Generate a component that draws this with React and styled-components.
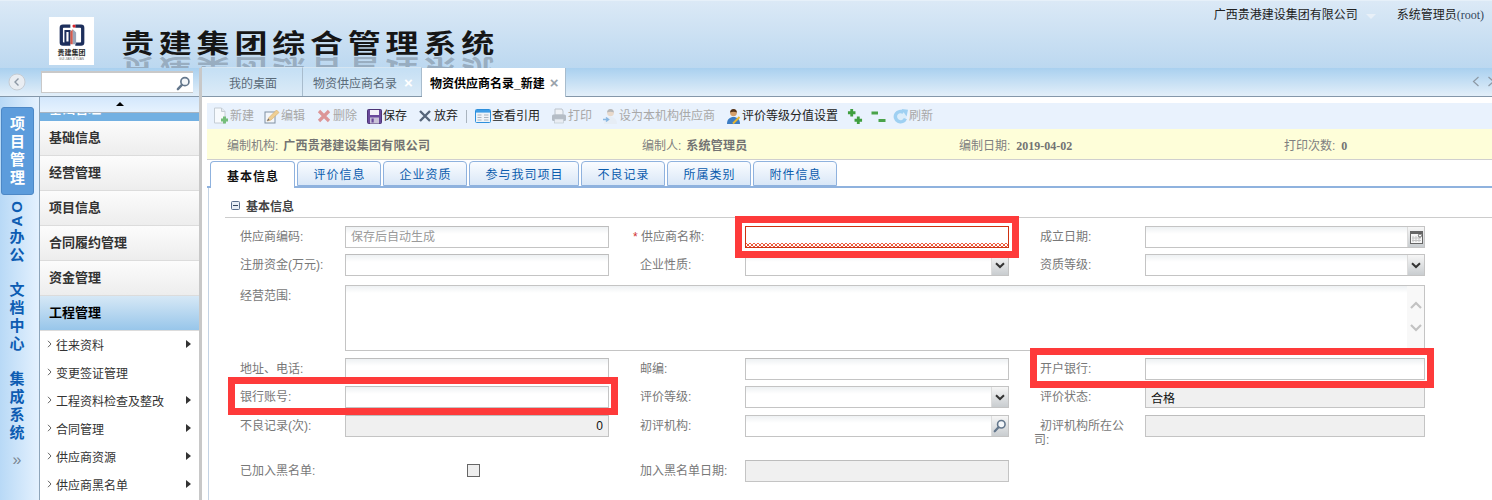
import React from "react";
import styled, { createGlobalStyle } from "styled-components";

const FONT = `"Liberation Sans", "Noto Sans CJK SC", sans-serif`;
const SERIF = `"Liberation Serif", "Noto Sans CJK SC", serif`;

const GlobalStyle = createGlobalStyle`
  html, body {
    margin: 0;
    padding: 0;
    background: #ffffff;
  }
  body {
    font-family: ${FONT};
    font-size: 12px;
  }
  * {
    box-sizing: border-box;
  }
`;

/* ---------- icons ---------- */

const LogoMark = () => (
  <svg width="28" height="27" viewBox="0 0 34 31">
    <path d="M15 2H6Q2 2 2 6V24Q2 28 6 28H15V24H7Q6 24 6 23V7Q6 6 7 6H15Z" fill="#1d2f5c" />
    <path d="M9 10H14V24H9Z" fill="none" stroke="#1d2f5c" strokeWidth="2.4" />
    <path d="M21 6H27Q28 6 28 7V23Q28 24 27 24H21V28H28Q32 28 32 24V6Q32 2 28 2H21Z" fill="#1d2f5c" />
    <path d="M15 26V11L18 8V26Z" fill="#d65b4d" />
    <path d="M18 26V8L22 12V26Z" fill="#9aa5b8" />
    <circle cx="19.5" cy="4" r="2" fill="#d8262c" />
  </svg>
);

const SearchIcon = ({ size = 15 }) => (
  <svg width={size} height={size} viewBox="0 0 16 16">
    <circle cx="9.5" cy="6" r="4.3" fill="#f4f7fa" stroke="#64778c" strokeWidth="1.8" />
    <path d="M6.3 9.4L2 14" stroke="#64778c" strokeWidth="2.6" strokeLinecap="round" />
  </svg>
);

const NewIcon = () => (
  <svg width="16" height="18" viewBox="0 0 16 18">
    <path d="M1.5 1H8.5L12 4.5V16H1.5Z" fill="#fbfcfd" stroke="#bcc4cc" />
    <path d="M8.5 1V4.5H12" fill="#e4e8ec" stroke="#bcc4cc" />
    <path d="M11.5 9.5V16.5M8 13H15" stroke="#57b05a" strokeWidth="3" />
  </svg>
);

const EditIcon = () => (
  <svg width="16" height="16" viewBox="0 0 16 16">
    <rect x="1" y="4" width="10" height="11" fill="#f6f8fa" stroke="#667a8e" />
    <path d="M3 13L5 9.5L12.5 2L15 4.5L7 12Z" fill="#f1c77a" stroke="#d4a251" strokeWidth=".7" />
    <path d="M3 13L4.3 10.6L5.6 12Z" fill="#445" />
  </svg>
);

const DeleteIcon = () => (
  <svg width="14" height="14" viewBox="0 0 14 14">
    <path d="M2 2L12 12M12 2L2 12" stroke="#d98080" strokeWidth="3.2" />
  </svg>
);

const SaveIcon = () => (
  <svg width="15" height="15" viewBox="0 0 15 15">
    <rect x="0.5" y="0.5" width="14" height="14" rx="1" fill="#6a4a9c" stroke="#4d3576" />
    <rect x="3" y="1" width="9" height="5" fill="#f3f3f8" />
    <rect x="3" y="8.5" width="9" height="6" fill="#c9c3d8" />
    <rect x="4.5" y="9.5" width="2.2" height="4" fill="#6a4a9c" />
  </svg>
);

const DiscardIcon = () => (
  <svg width="14" height="14" viewBox="0 0 14 14">
    <path d="M2 2L12 12M12 2L2 12" stroke="#56657a" strokeWidth="2.4" />
  </svg>
);

const ViewIcon = () => (
  <svg width="16" height="14" viewBox="0 0 16 14">
    <rect x="0.5" y="0.5" width="15" height="13" rx="1" fill="#eef3f8" stroke="#2d8fdc" />
    <rect x="1" y="1" width="14" height="2.6" fill="#3c9ce6" />
    <path d="M2.5 6H6.5M2.5 8.5H6.5M2.5 11H6.5M9 6H13.5M9 8.5H13.5M9 11H13.5" stroke="#a8b4c0" />
  </svg>
);

const PrintIcon = () => (
  <svg width="16" height="16" viewBox="0 0 16 16">
    <path d="M4 1H11L12 3V7H4Z" fill="#f1f3f5" stroke="#b0b8c0" />
    <rect x="1" y="6.5" width="14" height="6.5" rx="1.5" fill="#a9b1b9" />
    <rect x="3.5" y="11" width="9" height="4" fill="#e9edf1" stroke="#b0b8c0" strokeWidth=".6" />
  </svg>
);

const UserIcon = ({ muted, pen }) => (
  <svg width="16" height="17" viewBox="0 0 16 17">
    <circle cx="8.5" cy="4.8" r="3.4" fill={muted ? "#e8d3bf" : "#d6a06a"} />
    <path d="M8.5 1C6 1 5 3 5.2 4.4C7 3.6 10 3.6 11.8 4.4C12 3 11 1 8.5 1Z" fill={muted ? "#a9a9a9" : "#54351c"} />
    <path d="M2 16C2 11 5 9 8.5 9C12 9 15 11 15 16Z" fill={muted ? "#e6edf4" : "#3b7cc2"} />
    {pen && <path d="M8 15.5L14.5 9" stroke="#e8b62e" strokeWidth="2" />}
    {!pen && <path d="M1 11.5H6M4 9.5L6.5 11.5L4 13.5" fill="none" stroke="#70a9dc" strokeWidth="1.6" />}
  </svg>
);

const PlusPair = () => (
  <svg width="17" height="17" viewBox="0 0 17 17">
    <path d="M5 0.5V8.5M1 4.5H9M12 8.5V16.5M8 12.5H16" stroke="#3f9f3f" strokeWidth="3" />
  </svg>
);

const MinusPair = () => (
  <svg width="15" height="13" viewBox="0 0 15 13">
    <path d="M0.5 3H7M7.5 10.5H14.5" stroke="#4aa34a" strokeWidth="2.8" />
  </svg>
);

const RefreshIcon = () => (
  <svg width="15" height="15" viewBox="0 0 15 15">
    <circle cx="7" cy="8" r="6.5" fill="#d8ecfa" />
    <path d="M12.4 9.6A5.2 5.2 0 1 1 10.6 3.4" fill="none" stroke="#8cc8f0" strokeWidth="3.4" />
    <path d="M8.5 0L15 0.8L13.6 7.4Z" fill="#8cc8f0" />
  </svg>
);

const MinusBox = () => (
  <svg width="9" height="9" viewBox="0 0 9 9">
    <rect x="0.5" y="0.5" width="8" height="8" rx="1" fill="#e8eef5" stroke="#5a6f8c" />
    <path d="M2 4.5H7" stroke="#33445c" />
  </svg>
);

const ArrowDown = () => (
  <svg width="10" height="7" viewBox="0 0 10 7">
    <path d="M1 1.2L5 5L9 1.2" fill="none" stroke="#333" strokeWidth="2" />
  </svg>
);

const CalendarIcon = () => (
  <svg width="13" height="13" viewBox="0 0 13 13">
    <rect x="0.5" y="0.5" width="12" height="12" fill="#f6f6f6" stroke="#666" />
    <rect x="1" y="1" width="11" height="2" fill="#666" />
    <path d="M3 5V11M6 5V11M9 5V11M2 7H11M2 9.5H11" stroke="#c4c4c4" />
    <circle cx="10" cy="4.5" r="1.6" fill="#fff" stroke="#444" strokeWidth=".8" />
  </svg>
);

const SmallChevron = ({ up }) => (
  <svg width="12" height="8" viewBox="0 0 12 8">
    <path d={up ? "M1 7L6 2L11 7" : "M1 1L6 6L11 1"} fill="none" stroke="#c2c2c2" strokeWidth="2.2" />
  </svg>
);

const TabArrow = ({ right }) => (
  <svg width="8" height="11" viewBox="0 0 8 11">
    <path d={right ? "M1.5 1L6.5 5.5L1.5 10" : "M6.5 1L1.5 5.5L6.5 10"} fill="none" stroke="#8d99a5" strokeWidth="1.2" />
  </svg>
);

const BackCircle = () => (
  <svg width="18" height="18" viewBox="0 0 18 18">
    <circle cx="9" cy="9" r="8" fill="#e9edf2" stroke="#c6ccd3" />
    <path d="M10.5 5.5L7 9L10.5 12.5" fill="none" stroke="#8d98a5" strokeWidth="1.4" />
  </svg>
);

const Chevron = () => (
  <svg width="5" height="8" viewBox="0 0 5 8">
    <path d="M1 .8L4 4L1 7.2" fill="none" stroke="#666" />
  </svg>
);

const RightCaret = () => (
  <svg width="5" height="8" viewBox="0 0 5 8">
    <path d="M0 0L5 4L0 8Z" fill="#333" />
  </svg>
);

/* ---------- data ---------- */

const railGroups = [
  { chars: ["项", "目", "管", "理"], active: true },
  { chars: ["O", "A", "办", "公"] },
  { chars: ["文", "档", "中", "心"] },
  { chars: ["集", "成", "系", "统"] },
];

const menuItems = ["基础信息", "经营管理", "项目信息", "合同履约管理", "资金管理"];

const subItems = [
  { label: "往来资料", more: true },
  { label: "变更签证管理" },
  { label: "工程资料检查及整改", more: true },
  { label: "合同管理", more: true },
  { label: "供应商资源", more: true },
  { label: "供应商黑名单", more: true },
];

const toolItems = [
  { icon: <NewIcon />, text: "新建", off: true, w: 51 },
  { icon: <EditIcon />, text: "编辑", off: true, w: 52 },
  { icon: <DeleteIcon />, text: "删除", off: true, w: 50 },
  { icon: <SaveIcon />, text: "保存", w: 51 },
  { icon: <DiscardIcon />, text: "放弃", w: 49 },
];

const toolItemsRest = [
  { icon: <ViewIcon />, text: "查看引用", w: 76 },
  { icon: <PrintIcon />, text: "打印", off: true, w: 51 },
  { icon: <UserIcon muted />, text: "设为本机构供应商", off: true, w: 123 },
  { icon: <UserIcon pen />, text: "评价等级分值设置", w: 122 },
  { icon: <PlusPair />, w: 23 },
  { icon: <MinusPair />, w: 22 },
  { icon: <RefreshIcon />, text: "刷新", off: true, w: 50 },
];

const formTabs = [
  { label: "基本信息", w: 85, active: true },
  { label: "评价信息", w: 84 },
  { label: "企业资质", w: 84 },
  { label: "参与我司项目", w: 110 },
  { label: "不良记录", w: 84 },
  { label: "所属类别", w: 84 },
  { label: "附件信息", w: 84 },
];

/* ---------- small parts ---------- */

const Tool = ({ item }) => (
  <ToolItem $off={item.off} $w={item.w}>
    <ToolGlyph $off={item.off}>{item.icon}</ToolGlyph>
    {item.text}
  </ToolItem>
);

export default function App() {
  return (
    <Page>
      <GlobalStyle />
      <TopBar>
        <Logo>
          <LogoMark />
          <LogoName>贵建集团</LogoName>
          <LogoLatin>GUI JIAN JI TUAN</LogoLatin>
        </Logo>
        <Title>
          <TitleText>贵建集团综合管理系统</TitleText>
          <TitleShadow aria-hidden="true">
            <TitleMirror />
          </TitleShadow>
        </Title>
        <UserBox>
          <span>广西贵港建设集团有限公司</span>
          <DropTriangle />
          <UserName>
            系统管理员<UserId>(root)</UserId>
          </UserName>
        </UserBox>
      </TopBar>

      <Body>
        <Side>
          <SearchRow>
            <BackSlot>
              <BackCircle />
            </BackSlot>
            <SearchBox>
              <SearchIcon />
            </SearchBox>
          </SearchRow>
          <SideBody>
            <Rail>
              {railGroups.map((group) =>
                group.active ? (
                  <RailActive key={group.chars[0]}>
                    {group.chars.map((c) => (
                      <span key={c}>{c}</span>
                    ))}
                  </RailActive>
                ) : (
                  <RailGroup key={group.chars[0]}>
                    {group.chars.map((c) =>
                      /[A-Z]/.test(c) ? (
                        <RailLatin key={c}>{c}</RailLatin>
                      ) : (
                        <span key={c}>{c}</span>
                      )
                    )}
                  </RailGroup>
                )
              )}
              <RailMore>»</RailMore>
            </Rail>
            <Menu>
              <ScrollUp>
                <UpTriangle />
              </ScrollUp>
              <ClippedHead>
                <span>基础管理</span>
              </ClippedHead>
              {menuItems.map((item) => (
                <MenuItem key={item}>{item}</MenuItem>
              ))}
              <MenuItem $active>工程管理</MenuItem>
              <SubList>
                {subItems.map((item) => (
                  <SubItem key={item.label}>
                    <Chevron />
                    <SubLabel>{item.label}</SubLabel>
                    {item.more && <RightCaret />}
                  </SubItem>
                ))}
              </SubList>
            </Menu>
          </SideBody>
        </Side>
        <Splitter />
        <Main>
          <TabBar>
            <PageTab $w={101}>我的桌面</PageTab>
            <PageTab $w={119}>
              物资供应商名录<TabClose>×</TabClose>
            </PageTab>
            <PageTab $w={144} $active>
              物资供应商名录_新建<TabClose $dark>×</TabClose>
            </PageTab>
            <TabArrows>
              <TabArrow />
              <TabArrow right />
            </TabArrows>
          </TabBar>
          <Content>
            <Toolbar>
              {toolItems.map((item) => (
                <Tool key={item.text} item={item} />
              ))}
              <ToolSep />
              {toolItemsRest.map((item, i) => (
                <Tool key={i} item={item} />
              ))}
            </Toolbar>
            <InfoBar>
              <InfoCell $w={415}>
                编制机构:<InfoValue>广西贵港建设集团有限公司</InfoValue>
              </InfoCell>
              <InfoCell $w={317}>
                编制人:<InfoValue>系统管理员</InfoValue>
              </InfoCell>
              <InfoCell $w={325}>
                编制日期:<SerifBold>2019-04-02</SerifBold>
              </InfoCell>
              <InfoCell>
                打印次数:<SerifBold>0</SerifBold>
              </InfoCell>
            </InfoBar>
            <FormTabs>
              {formTabs.map((tab) => (
                <FormTab key={tab.label} $w={tab.w} $active={tab.active}>
                  {tab.label}
                </FormTab>
              ))}
            </FormTabs>
            <Panel>
              <SectionHead>
                <MinusBox />
                <span>基本信息</span>
              </SectionHead>
              <FormGrid>
                <Field>
                  <Label>供应商编码:</Label>
                  <Input $w={264} readOnly placeholder="保存后自动生成" />
                </Field>
                <Field>
                  <Label>
                    <Star>*</Star> 供应商名称:
                  </Label>
                  <ErrorWrap>
                    <ErrorInput />
                    <Mark $t={-10} $r={-10} $b={-10} $l={-10} />
                  </ErrorWrap>
                </Field>
                <Field>
                  <Label>成立日期:</Label>
                  <Combo $w={280}>
                    <ComboInput />
                    <ComboBtn>
                      <CalendarIcon />
                    </ComboBtn>
                  </Combo>
                </Field>

                <Field>
                  <Label>注册资金(万元):</Label>
                  <Input $w={264} />
                </Field>
                <Field>
                  <Label>企业性质:</Label>
                  <Combo $w={264}>
                    <ComboInput />
                    <ComboBtn>
                      <ArrowDown />
                    </ComboBtn>
                  </Combo>
                </Field>
                <Field>
                  <Label>资质等级:</Label>
                  <Combo $w={280}>
                    <ComboInput />
                    <ComboBtn>
                      <ArrowDown />
                    </ComboBtn>
                  </Combo>
                </Field>

                <WideField>
                  <Label>经营范围:</Label>
                  <AreaBox>
                    <AreaText />
                    <AreaScroll>
                      <SmallChevron up />
                      <SmallChevron />
                    </AreaScroll>
                  </AreaBox>
                </WideField>

                <Field>
                  <Label>地址、电话:</Label>
                  <Input $w={264} />
                </Field>
                <Field>
                  <Label>邮编:</Label>
                  <Input $w={264} />
                </Field>
                <Field>
                  <Label>开户银行:</Label>
                  <Input $w={280} />
                  <Mark $t={-10} $r={-9} $b={-8} $l={-4} />
                </Field>

                <Field>
                  <Label>银行账号:</Label>
                  <Input $w={264} />
                  <Mark $t={-9} $r={-9} $b={-7} $l={-6} />
                </Field>
                <Field>
                  <Label>评价等级:</Label>
                  <Combo $w={264}>
                    <ComboInput />
                    <ComboBtn>
                      <ArrowDown />
                    </ComboBtn>
                  </Combo>
                </Field>
                <Field>
                  <Label>评价状态:</Label>
                  <Input $w={280} $off readOnly value="合格" />
                </Field>

                <Field>
                  <Label>不良记录(次):</Label>
                  <Input $w={264} $off $right readOnly value="0" />
                </Field>
                <Field>
                  <Label>初评机构:</Label>
                  <Combo $w={264}>
                    <ComboInput />
                    <ComboBtn>
                      <SearchIcon size={14} />
                    </ComboBtn>
                  </Combo>
                </Field>
                <Field>
                  <Label $wrap>初评机构所在公司:</Label>
                  <Input $w={280} $off readOnly />
                </Field>

                <Field>
                  <Label>已加入黑名单:</Label>
                  <CheckSlot>
                    <CheckBox />
                  </CheckSlot>
                </Field>
                <Field>
                  <Label>加入黑名单日期:</Label>
                  <Input $w={264} $off readOnly />
                </Field>
              </FormGrid>
            </Panel>
          </Content>
        </Main>
      </Body>
    </Page>
  );
}

/* ---------- page ---------- */

const Page = styled.div`
  width: 1492px;
  height: 500px;
  overflow: hidden;
  position: relative;
  background: #ffffff;
  color: #333;
`;

const TopBar = styled.header`
  height: 68px;
  padding-left: 49px;
  display: flex;
  align-items: flex-start;
  background: linear-gradient(#dbe9f6, #bcd8f0);
  border-top: 1px solid #e6f0f9;
`;

const Logo = styled.div`
  width: 45px;
  height: 48px;
  margin-top: 16px;
  padding-top: 5px;
  background: #ffffff;
  display: flex;
  flex-direction: column;
  align-items: center;
`;

const LogoName = styled.div`
  font-size: 7px;
  line-height: 8px;
  font-weight: 700;
  color: #2a2a2a;
`;

const LogoLatin = styled.div`
  font-size: 3px;
  line-height: 4px;
  color: #666;
  white-space: nowrap;
`;

const Title = styled.div`
  position: relative;
  margin: 23px 0 0 27px;
  font-family: "Noto Sans CJK SC", sans-serif;
  font-size: 33px;
  line-height: 37px;
  font-weight: 700;
  letter-spacing: 4.8px;
  color: #161616;
  white-space: nowrap;
`;

const TitleText = styled.div`
  transform: scaleY(0.78);
`;

/* the mirror under the title, cut off where the bar below begins */
const TitleShadow = styled.div`
  position: absolute;
  left: 0;
  top: 33px;
  height: 11px;
  overflow: hidden;
`;

const TitleMirror = styled.div`
  margin-top: -6px;
  transform: scaleY(-0.78);
  color: rgba(70, 78, 88, 0.32);

  &::before {
    content: "贵建集团综合管理系统";
  }
`;

const UserBox = styled.div`
  margin: 6px 8px 0 auto;
  display: flex;
  align-items: center;
  color: #222;
  line-height: 16px;
`;

const DropTriangle = styled.i`
  width: 0;
  height: 0;
  margin: 2px 0 0 8px;
  border-left: 5px solid transparent;
  border-right: 5px solid transparent;
  border-top: 5px solid #e8f0f8;
`;

const UserName = styled.span`
  margin-left: 21px;
`;

const UserId = styled.span`
  font-family: ${SERIF};
  color: #33475c;
`;

const Body = styled.div`
  display: flex;
  height: 432px;
`;

/* ---------- sidebar ---------- */

const Side = styled.aside`
  width: 199px;
  display: flex;
  flex-direction: column;
  flex-shrink: 0;
`;

const SearchRow = styled.div`
  height: 29px;
  padding-top: 3px;
  display: flex;
  align-items: flex-start;
  background: linear-gradient(#a9d0ef, #e3eff9);
  border-bottom: 1px solid #8497a9;
`;

const BackSlot = styled.div`
  width: 41px;
  padding: 2px 0 0 8px;
`;

const SearchBox = styled.div`
  width: 152px;
  height: 22px;
  padding: 3px 2px 0 0;
  display: flex;
  justify-content: flex-end;
  background: #ffffff;
  border: 1px solid #c9c9c9;
  border-right: none;
  border-top-width: 2px;
`;

const SideBody = styled.div`
  flex: 1;
  display: flex;
  min-height: 0;
`;

const Rail = styled.nav`
  width: 40px;
  padding-top: 10px;
  flex-shrink: 0;
  background: linear-gradient(90deg, #b8d9f6, #e4f1fe);
  border-right: 1px solid #8ea5ba;
`;

const RailActive = styled.div`
  width: 33px;
  height: 88px;
  margin: 0 0 0 1px;
  padding-top: 7px;
  display: flex;
  flex-direction: column;
  align-items: center;
  background: #5c9cdc;
  border: 1px solid #4d88c6;
  border-radius: 3px;
  color: #ffffff;
  font-size: 15px;
  line-height: 18px;
  font-weight: 700;
`;

const RailGroup = styled.div`
  width: 34px;
  margin: 5px 0 17px;
  display: flex;
  flex-direction: column;
  align-items: center;
  color: #0d5cb2;
  font-size: 15px;
  line-height: 18px;
  font-weight: 700;
`;

const RailLatin = styled.span`
  line-height: 14px;
  transform: rotate(-90deg);
`;

const RailMore = styled.div`
  width: 34px;
  margin-top: -8px;
  text-align: center;
  font-size: 16px;
  line-height: 18px;
  color: #7b8794;
`;

const Menu = styled.div`
  flex: 1;
  min-width: 0;
  background: #ffffff;
`;

const ScrollUp = styled.div`
  height: 16px;
  display: flex;
  justify-content: center;
  padding-top: 5px;
  background: linear-gradient(#d3e7fc, #e6f2fe);
  border-bottom: 1px solid #a8b4c0;
`;

const UpTriangle = styled.i`
  width: 0;
  height: 0;
  border-left: 4px solid transparent;
  border-right: 4px solid transparent;
  border-bottom: 4px solid #000;
`;

const ClippedHead = styled.div`
  height: 8px;
  overflow: hidden;
  padding-left: 9px;
  background: #72b0e2;
  color: #ffffff;
  font-size: 13px;
  font-weight: 700;
  line-height: 13px;

  span {
    display: block;
    margin-top: -11px;
  }
`;

const MenuItem = styled.div`
  height: 35px;
  padding: 0 0 4px 9px;
  display: flex;
  align-items: center;
  font-size: 13px;
  font-weight: 700;
  color: ${(p) => (p.$active ? "#000" : "#333")};
  background: ${(p) =>
    p.$active
      ? "linear-gradient(#d6e8f6, #98c6ea)"
      : "linear-gradient(#fcfcfc, #ededed)"};
  border-bottom: 1px solid #dcdcdc;
`;

const SubList = styled.div`
  margin-top: -1px;
`;

const SubItem = styled.div`
  height: 28px;
  padding: 0 8px 0 7px;
  display: flex;
  align-items: center;
  color: #333;
`;

const SubLabel = styled.span`
  margin-left: 4px;
  flex: 1;
`;

const Splitter = styled.div`
  width: 3px;
  flex-shrink: 0;
  background: #c8c8c8;
`;

/* ---------- main ---------- */

const Main = styled.main`
  flex: 1;
  min-width: 0;
  display: flex;
  flex-direction: column;
`;

const TabBar = styled.div`
  position: relative;
  height: 29px;
  display: flex;
  align-items: flex-end;
  background: linear-gradient(#a9d0ef, #e3eff9);
  border-bottom: 1px solid #8497a9;
`;

const PageTab = styled.div`
  width: ${(p) => p.$w}px;
  height: 29px;
  margin-bottom: ${(p) => (p.$active ? "-1px" : "0")};
  padding-left: ${(p) => (p.$w === 101 ? "27px" : p.$active ? "8px" : "10px")};
  display: flex;
  align-items: center;
  flex-shrink: 0;
  font-weight: ${(p) => (p.$active ? 700 : 400)};
  color: ${(p) => (p.$active ? "#000" : "#5a6a78")};
  background: ${(p) =>
    p.$active ? "#ffffff" : "linear-gradient(#c4dff4, #dcebf7)"};
  border-right: 1px solid #a8bccd;
  border-top: ${(p) => (p.$active ? "none" : "1px solid #d6e6f2")};
`;

const TabClose = styled.span`
  margin-left: ${(p) => (p.$dark ? "5px" : "7px")};
  font-size: 15px;
  line-height: 15px;
  font-weight: 700;
  color: ${(p) => (p.$dark ? "#9aa2aa" : "#ffffff")};
`;

const TabArrows = styled.div`
  position: absolute;
  right: -3px;
  top: 8px;
  display: flex;
  gap: 7px;
`;

const Content = styled.div`
  flex: 1;
  min-height: 0;
  padding: 6px 0 0 5px;
`;

const Toolbar = styled.div`
  height: 26px;
  padding-left: 6px;
  display: flex;
  align-items: center;
  background: #e9f2fd;
`;

const ToolItem = styled.div`
  width: ${(p) => p.$w}px;
  display: flex;
  align-items: center;
  flex-shrink: 0;
  line-height: 14px;
  color: ${(p) => (p.$off ? "#a8a8a8" : "#222")};
  white-space: nowrap;
`;

const ToolGlyph = styled.span`
  width: 16px;
  margin-right: 1px;
  display: flex;
  justify-content: center;
  opacity: ${(p) => (p.$off ? 0.8 : 1)};
`;

const ToolSep = styled.i`
  width: 1px;
  height: 13px;
  margin: 0 8px 0 0;
  background: #a9b4bf;
`;

const InfoBar = styled.div`
  height: 31px;
  padding: 1px 0 0 20px;
  display: flex;
  align-items: center;
  background: #fefed9;
  border-bottom: 1px solid #cfcfcf;
  color: #808080;
`;

const InfoCell = styled.div`
  width: ${(p) => (p.$w ? `${p.$w}px` : "auto")};
  flex-shrink: 0;
  white-space: nowrap;
`;

const InfoValue = styled.b`
  margin-left: 5px;
  letter-spacing: 0.25px;
  color: #737373;
`;

const SerifBold = styled.b`
  margin-left: 6px;
  font-family: ${SERIF};
  color: #737373;
`;

const FormTabs = styled.div`
  height: 28px;
  padding-left: 3px;
  display: flex;
  gap: 2px;
  align-items: flex-end;
  border-bottom: 2px solid #8fb2de;
`;

const FormTab = styled.div`
  width: ${(p) => p.$w}px;
  height: ${(p) => (p.$active ? "27px" : "25px")};
  margin-bottom: ${(p) => (p.$active ? "-2px" : "0")};
  padding-left: 1px;
  display: flex;
  align-items: center;
  justify-content: center;
  letter-spacing: 1px;
  font-weight: ${(p) => (p.$active ? 700 : 400)};
  color: ${(p) => (p.$active ? "#111" : "#0b5cad")};
  background: ${(p) =>
    p.$active ? "#ffffff" : "linear-gradient(#fafcff, #d9e7f7)"};
  border: 1px solid #8fb2de;
  border-bottom: ${(p) => (p.$active ? "none" : "1px solid #8fb2de")};
  border-radius: 4px 4px 0 0;
`;

const Panel = styled.section`
  height: 320px;
  margin-left: 1px;
  border-left: 1px solid #c4d3e4;
`;

const SectionHead = styled.div`
  height: 30px;
  margin-left: 16px;
  padding: 5px 0 0 6px;
  display: flex;
  align-items: center;
  gap: 6px;
  font-weight: 700;
  color: #444;
  border-bottom: 1px solid #cccccc;
`;

const FormGrid = styled.div`
  margin: 8px 0 0 25px;
  display: grid;
  grid-template-columns: 375px 375px 391px;
  grid-template-rows: 28px 31px 73px 28px 29px 45px 22px;
  column-gap: 25px;
`;

const Field = styled.div`
  position: relative;
  display: flex;
  align-items: flex-start;
  height: 22px;
`;

const WideField = styled(Field)`
  grid-column: 1 / -1;
`;

const Label = styled.label`
  width: 111px;
  flex-shrink: 0;
  padding-right: ${(p) => (p.$wrap ? "12px" : "0")};
  padding-top: ${(p) => (p.$wrap ? "4px" : "0")};
  text-indent: 6px;
  color: #787878;
  line-height: ${(p) => (p.$wrap ? "14px" : "22px")};
`;

const Star = styled.span`
  color: #d03030;
  margin-left: -7px;
`;

const Input = styled.input`
  width: ${(p) => p.$w}px;
  height: 22px;
  padding: 0 5px;
  font: 12px ${FONT};
  text-align: ${(p) => (p.$right ? "right" : "left")};
  color: #111;
  outline: none;
  border: 1px solid #c4c4c4;
  border-top-color: #bdbdbd;
  border-radius: 0;
  background: ${(p) =>
    p.$off ? "#f0f0f0" : "linear-gradient(#eef1f3, #ffffff 7px)"};

  &::placeholder {
    color: #9a9a9a;
    opacity: 1;
  }
`;

const ErrorWrap = styled.div`
  position: relative;
  width: 264px;
  height: 22px;
`;

const ErrorInput = styled.div`
  width: 264px;
  height: 22px;
  border: 1px solid #cf3110;
  background:
    linear-gradient(45deg, transparent 42%, #ec5a3c 42%, #ec5a3c 58%, transparent 58%) left bottom / 4px 4px repeat-x,
    linear-gradient(-45deg, transparent 42%, #ec5a3c 42%, #ec5a3c 58%, transparent 58%) left bottom / 4px 4px repeat-x,
    #ffffff;
`;

const Mark = styled.i`
  position: absolute;
  top: ${(p) => p.$t}px;
  right: ${(p) => p.$r}px;
  bottom: ${(p) => p.$b}px;
  left: ${(p) => p.$l}px;
  border: 7px solid #fe3a3a;
  pointer-events: none;
  z-index: 2;
`;

const Combo = styled.div`
  width: ${(p) => p.$w}px;
  height: 22px;
  display: flex;
  border: 1px solid #c4c4c4;
  background: linear-gradient(#eef1f3, #ffffff 7px);
`;

const ComboInput = styled.div`
  flex: 1;
`;

const ComboBtn = styled.div`
  width: 17px;
  display: flex;
  align-items: center;
  justify-content: center;
  background: linear-gradient(#f6f6f6, #c9cdd0);
  border-left: 1px solid #dcdcdc;
`;

const AreaBox = styled.div`
  width: 1080px;
  height: 66px;
  display: flex;
  border: 1px solid #c4c4c4;
  background: #ffffff;
`;

const AreaText = styled.div`
  flex: 1;
  background: linear-gradient(#eef1f3, #ffffff 7px);
`;

const AreaScroll = styled.div`
  width: 17px;
  padding-top: 15px;
  display: flex;
  flex-direction: column;
  align-items: center;
  gap: 15px;
  background: #f8f8f8;
`;

const CheckSlot = styled.div`
  width: 264px;
  padding: 4px 0 0 122px;
`;

const CheckBox = styled.i`
  display: block;
  width: 13px;
  height: 13px;
  background: #eeeeee;
  border: 1px solid #666;
`;
